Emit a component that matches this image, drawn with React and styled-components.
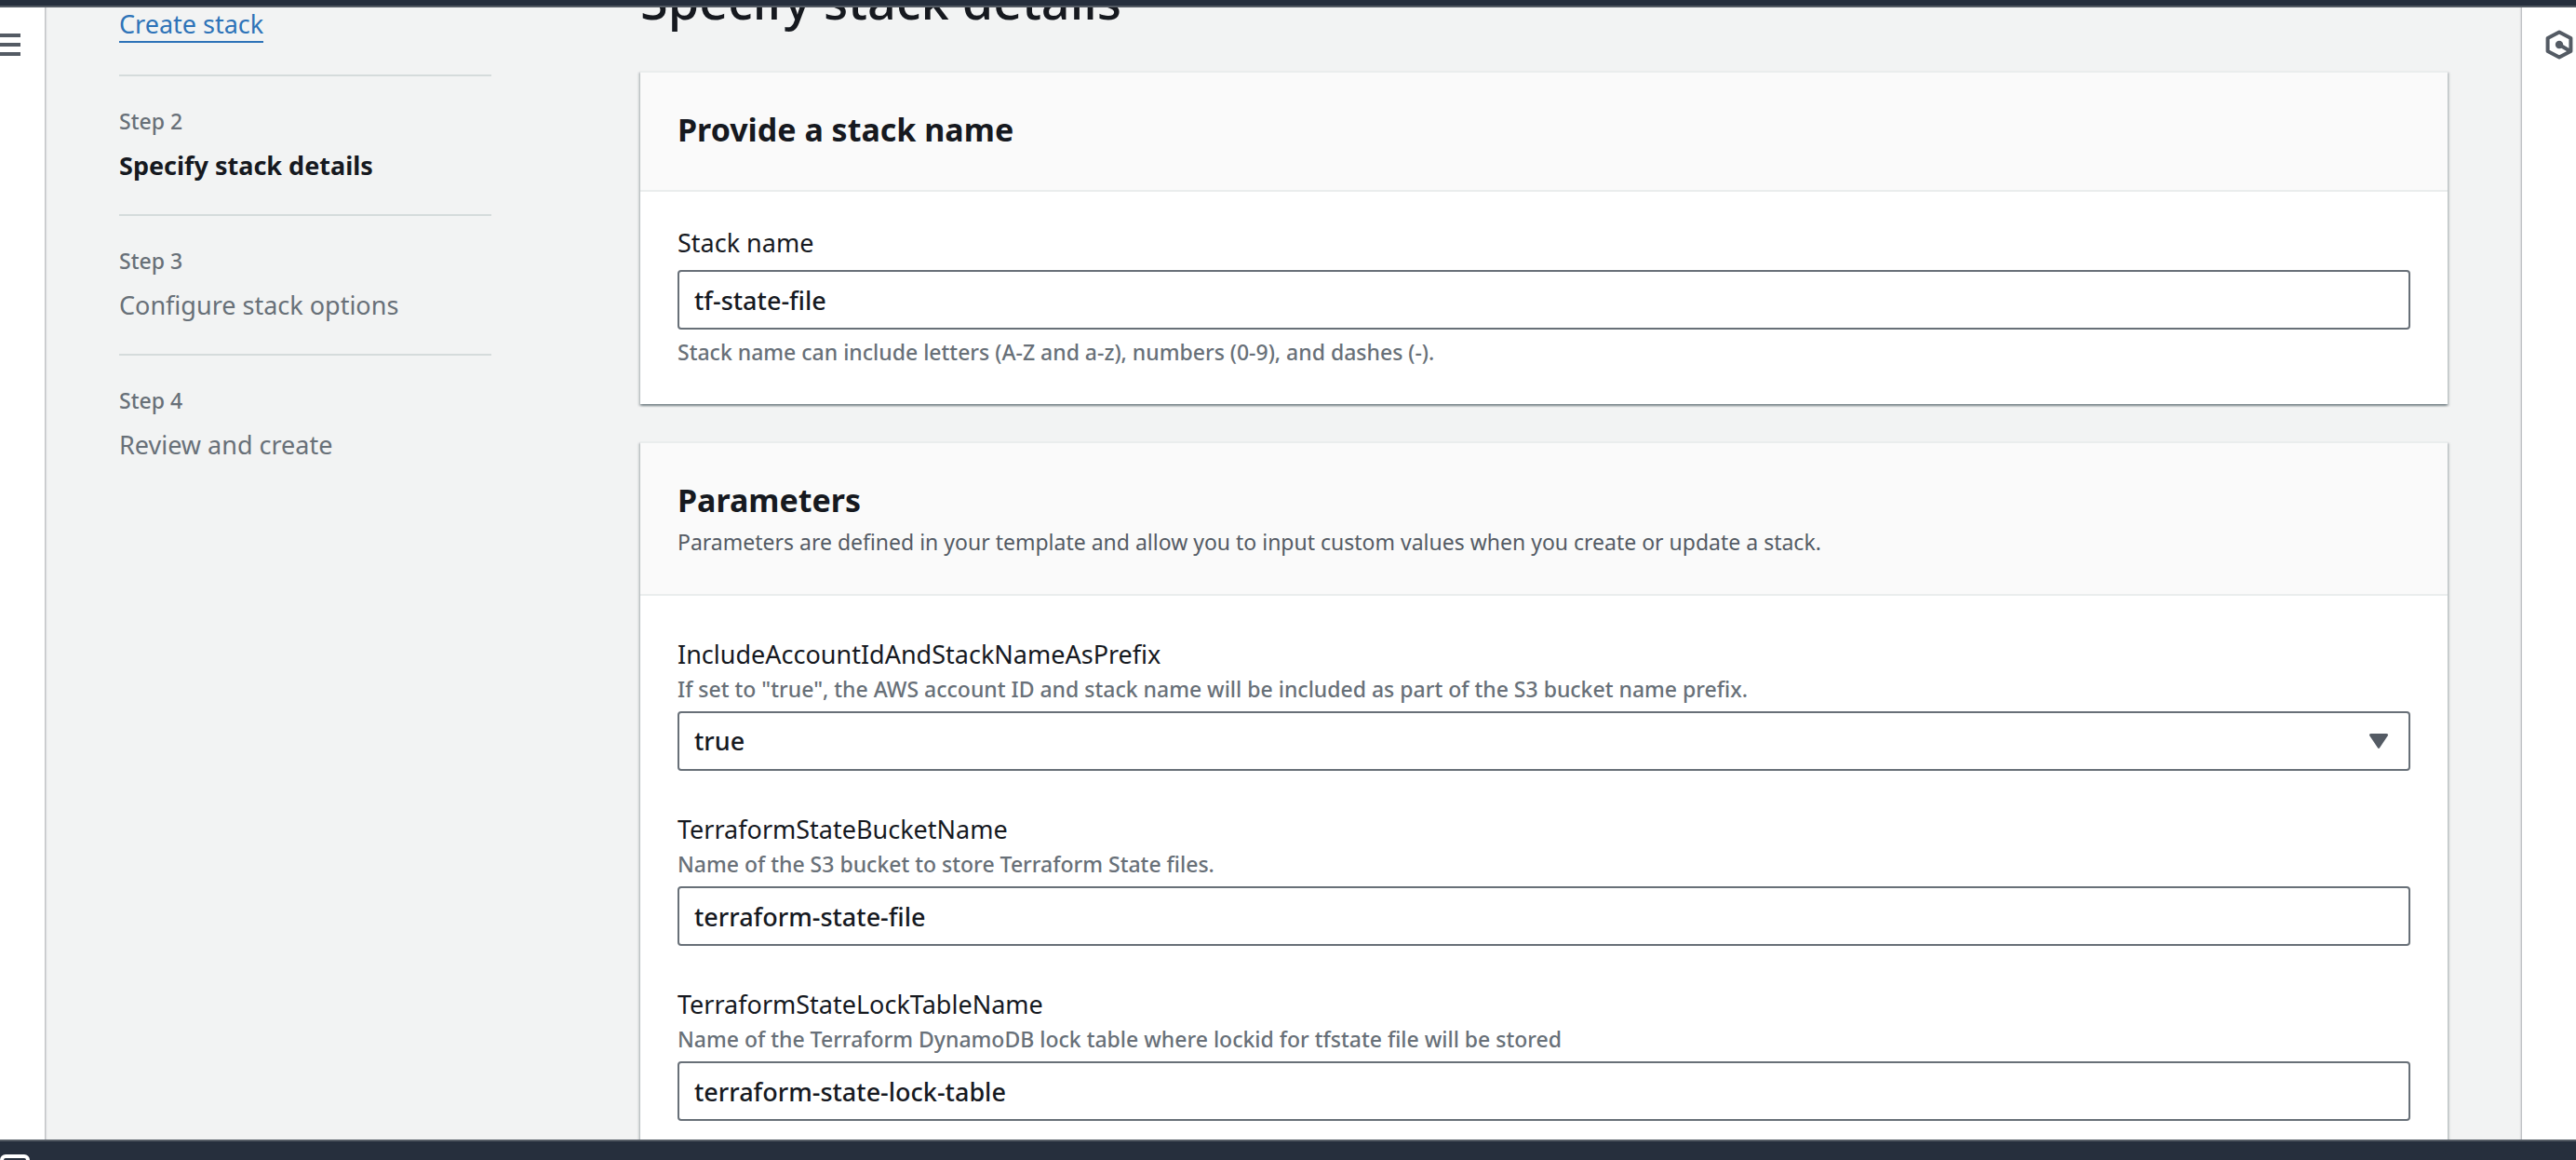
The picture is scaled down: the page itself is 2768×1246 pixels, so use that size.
import React, { useState } from "react";
import styled, { createGlobalStyle, css } from "styled-components";

const color = {
  text: "#16191f",
  muted: "#687078",
  secondary: "#545b64",
  link: "#2e73b8",
  bar: "#262f3d",
  page: "#f2f3f3",
  divider: "#d5dbdb",
  headerLine: "#eaeded",
};

const GlobalStyle = createGlobalStyle`
  *, *::before, *::after { box-sizing: border-box; }
  body {
    margin: 0;
    background: ${color.page};
    color: ${color.text};
    font-family: "Noto Sans", "Open Sans", sans-serif;
    font-size: 27px;
    line-height: 36px;
  }
`;

const Shell = styled.div`
  display: flex;
  flex-direction: column;
  height: 100vh;
  overflow: hidden;
`;

const TopBar = styled.header`
  flex: none;
  height: 8px;
  background: ${color.bar};
  border-bottom: 2px solid ${color.secondary};
`;

const Body = styled.div`
  display: flex;
  flex: 1;
  min-height: 0;
  overflow: hidden;
`;

const Rail = styled.aside`
  z-index: 1;
  flex: none;
  width: ${(p) => p.$width}px;
  background: #fff;
  box-shadow: 0 0 2px 1px rgba(0, 7, 22, 0.3);
`;

const IconButton = styled.button`
  display: flex;
  align-items: center;
  width: 100%;
  height: 80px;
  padding: 0;
  padding-left: ${(p) => p.$inset}px;
  border: 0;
  background: none;
  color: ${color.secondary};
  cursor: pointer;

  svg {
    display: block;
    flex: none;
  }
`;

const Content = styled.main`
  display: flex;
  flex: 1;
  align-items: flex-start;
  gap: 160px;
  min-width: 0;
  padding: 0 80px;
`;

const Steps = styled.ol`
  flex: none;
  width: 400px;
  margin: 0;
  padding: 0;
  list-style: none;
`;

const Step = styled.li`
  display: flex;
  flex-direction: column;
  align-items: flex-start;
  gap: 14px;
  padding-bottom: 34px;

  & + & {
    padding-top: 32px;
    border-top: 2px solid ${color.divider};
  }
`;

const StepNumber = styled.span`
  color: ${color.muted};
  font-size: 23px;
  font-weight: 500;
  line-height: 32px;
`;

const StepTitle = styled.span`
  color: ${(p) => (p.$active ? color.text : color.muted)};
  font-weight: ${(p) => (p.$active ? 700 : 400)};
`;

const StepLink = styled.a`
  border-bottom: 2px solid ${color.link};
  color: ${color.link};
  text-decoration: none;
`;

const FormColumn = styled.form`
  display: flex;
  flex: 1;
  flex-direction: column;
  gap: 40px;
  min-width: 0;
  margin-top: -42px;
`;

const PageTitle = styled.h1`
  margin: 0;
  padding-bottom: 2px;
  font-size: 54px;
  font-weight: 500;
  line-height: 68px;
`;

const Card = styled.section`
  border-top: 2px solid ${color.headerLine};
  background: #fff;
  box-shadow:
    0 2px 2px 0 rgba(0, 28, 36, 0.3),
    2px 2px 2px 0 rgba(0, 28, 36, 0.15),
    -2px 2px 2px 0 rgba(0, 28, 36, 0.15);
`;

const CardHeader = styled.div`
  padding: 38px 40px;
  border-bottom: 2px solid ${color.headerLine};
  background: #fafafa;
`;

const CardTitle = styled.h2`
  margin: 0;
  padding: 2px 0 6px;
  font-size: 34px;
  font-weight: 700;
  line-height: 42px;
`;

const CardText = styled.p`
  margin: 0;
  color: ${color.secondary};
  font-size: 23px;
`;

const CardBody = styled.div`
  display: flex;
  flex-direction: column;
  gap: 40px;
  padding: ${(p) => (p.$spacious ? 40 : 32)}px 40px 40px;
`;

const FieldBox = styled.div`
  display: flex;
  flex-direction: column;
`;

const Label = styled.label`
  padding-top: 2px;
  line-height: 42px;
`;

const Hint = styled.span`
  color: ${color.muted};
  font-size: 23px;
  font-weight: 500;
  line-height: 32px;
`;

const control = css`
  width: 100%;
  height: 64px;
  padding: 0 16px;
  border: 2px solid #687078;
  border-radius: 4px;
  background: #fff;
  color: ${color.text};
  font: inherit;
  font-weight: 500;
  outline: none;
`;

const TextInput = styled.input`
  ${control}
`;

const SelectInput = styled.select`
  ${control}
  appearance: none;
`;

const ControlBox = styled.div`
  position: relative;
  display: flex;
  margin-top: 8px;
  margin-bottom: ${(p) => (p.$hintBelow ? 8 : 0)}px;
`;

const Caret = styled.svg`
  position: absolute;
  top: 24px;
  right: 24px;
  pointer-events: none;
`;

const BottomBar = styled.footer`
  flex: none;
  height: 22px;
  padding-top: 14px;
  overflow: hidden;
  border-top: 2px solid ${color.secondary};
  background: ${color.bar};
`;

const ShellButton = styled.button`
  display: block;
  padding: 0;
  border: 0;
  background: none;
  color: #fff;
  cursor: pointer;

  svg {
    display: block;
  }
`;

const MenuIcon = () => (
  <svg width="22" height="24" viewBox="0 0 22 24" fill="currentColor">
    <path d="M0 0h22v4H0zM0 10h22v4H0zM0 20h22v4H0z" />
  </svg>
);

const HexIcon = () => (
  <svg width="32" height="32" viewBox="0 0 32 32" fill="none" stroke="currentColor" strokeWidth="4" strokeLinejoin="round">
    <path d="M16 2.4 28.4 9v14L16 29.6 3.6 23V9z" />
    <path d="M16 16l11 6.4" />
    <circle cx="16" cy="16" r="4.2" fill="currentColor" stroke="none" />
  </svg>
);

const TerminalIcon = () => (
  <svg width="32" height="32" viewBox="0 0 32 32" fill="none" stroke="currentColor" strokeWidth="4">
    <rect x="2" y="2" width="28" height="28" rx="4" />
    <path d="M8 10l6 6-6 6M16 22h8" />
  </svg>
);

const steps = [
  { title: "Create stack", href: "#create" },
  { number: "Step 2", title: "Specify stack details", active: true },
  { number: "Step 3", title: "Configure stack options" },
  { number: "Step 4", title: "Review and create" },
];

const parameters = [
  {
    id: "IncludeAccountIdAndStackNameAsPrefix",
    hint: 'If set to "true", the AWS account ID and stack name will be included as part of the S3 bucket name prefix.',
    value: "true",
    options: ["true", "false"],
  },
  {
    id: "TerraformStateBucketName",
    hint: "Name of the S3 bucket to store Terraform State files.",
    value: "terraform-state-file",
  },
  {
    id: "TerraformStateLockTableName",
    hint: "Name of the Terraform DynamoDB lock table where lockid for tfstate file will be stored",
    value: "terraform-state-lock-table",
  },
];

function Field({ id, label, hint, hintBelow, value: initial, options }) {
  const [value, setValue] = useState(initial);
  const shared = {
    id,
    value,
    onChange: (e) => setValue(e.target.value),
    "aria-describedby": `${id}-hint`,
  };
  const hintNode = <Hint id={`${id}-hint`}>{hint}</Hint>;
  return (
    <FieldBox>
      <Label htmlFor={id}>{label}</Label>
      {!hintBelow && hintNode}
      <ControlBox $hintBelow={hintBelow}>
        {options ? (
          <>
            <SelectInput {...shared}>
              {options.map((o) => (
                <option key={o}>{o}</option>
              ))}
            </SelectInput>
            <Caret width="20" height="16" viewBox="0 0 20 16" fill={color.secondary} aria-hidden="true">
              <path d="M2 0h16q3 0 1.6 2.6L11.2 15q-1.2 2-2.4 0L.4 2.6Q-1 0 2 0z" />
            </Caret>
          </>
        ) : (
          <TextInput type="text" {...shared} />
        )}
      </ControlBox>
      {hintBelow && hintNode}
    </FieldBox>
  );
}

export default function App() {
  return (
    <>
      <GlobalStyle />
      <Shell>
        <TopBar />
        <Body>
          <Rail $width={48}>
            <IconButton type="button" aria-label="Open navigation" $inset={0}>
              <MenuIcon />
            </IconButton>
          </Rail>
          <Content>
            <Steps>
              {steps.map((s) => (
                <Step key={s.title}>
                  {s.number && <StepNumber>{s.number}</StepNumber>}
                  {s.href ? (
                    <StepLink href={s.href}>{s.title}</StepLink>
                  ) : (
                    <StepTitle $active={s.active}>{s.title}</StepTitle>
                  )}
                </Step>
              ))}
            </Steps>
            <FormColumn>
              <PageTitle>Specify stack details</PageTitle>
              <Card>
                <CardHeader>
                  <CardTitle>Provide a stack name</CardTitle>
                </CardHeader>
                <CardBody>
                  <Field
                    id="stack-name"
                    label="Stack name"
                    hint="Stack name can include letters (A-Z and a-z), numbers (0-9), and dashes (-)."
                    hintBelow
                    value="tf-state-file"
                  />
                </CardBody>
              </Card>
              <Card>
                <CardHeader>
                  <CardTitle>Parameters</CardTitle>
                  <CardText>
                    Parameters are defined in your template and allow you to input custom values when you create or
                    update a stack.
                  </CardText>
                </CardHeader>
                <CardBody $spacious>
                  {parameters.map((p) => (
                    <Field key={p.id} label={p.id} {...p} />
                  ))}
                </CardBody>
              </Card>
            </FormColumn>
          </Content>
          <Rail $width={58}>
            <IconButton type="button" aria-label="Open assistant" $inset={24}>
              <HexIcon />
            </IconButton>
          </Rail>
        </Body>
        <BottomBar>
          <ShellButton type="button" aria-label="Open shell">
            <TerminalIcon />
          </ShellButton>
        </BottomBar>
      </Shell>
    </>
  );
}
